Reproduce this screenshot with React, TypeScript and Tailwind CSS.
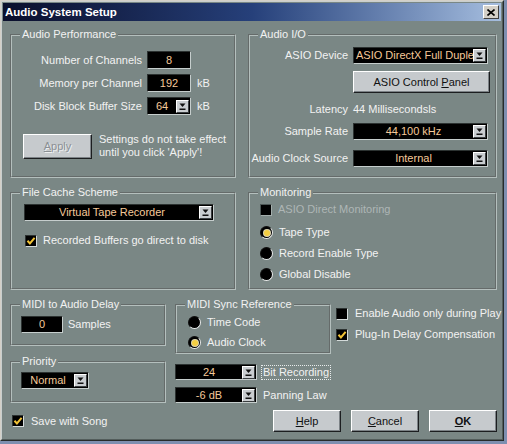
import type { ReactNode } from 'react'

// Cubase-style "Audio System Setup" dialog (classic Windows look)

function Group({ title, className, children }: { title: string; className: string; children?: ReactNode }) {
  return (
    <fieldset className={`border-2 [border-style:groove] border-[#b4bfbd] min-w-0 ${className}`}>
      <legend className="ml-[8px] px-[2px] leading-[13px]">{title}</legend>
      {children}
    </fieldset>
  )
}

function Arrow() {
  return (
    <div className="w-[13px] h-[13px] shrink-0 mr-px flex items-center justify-center bg-[#c9cdd0] border border-t-white border-l-white border-r-[#3a3e40] border-b-[#3a3e40]">
      <svg width="9" height="9" viewBox="0 0 9 9">
        <path d="M1.5 1.5h6L4.5 5z" fill="#111" />
        <rect x="1.5" y="6.5" width="6" height="1.5" fill="#111" />
      </svg>
    </div>
  )
}

function Field({ className, children }: { className: string; children?: ReactNode }) {
  return (
    <div className={`flex items-center justify-center bg-black text-[#f5c99a] border border-t-[#2c3231] border-l-[#2c3231] border-r-[#c6cecd] border-b-[#c6cecd] ${className}`}>
      {children}
    </div>
  )
}

function Combo({ text, className, left }: { text: string; className: string; left?: boolean }) {
  return (
    <div className={`flex items-center bg-black text-[#f5c99a] border border-t-[#2c3231] border-l-[#2c3231] border-r-[#c6cecd] border-b-[#c6cecd] ${className}`}>
      <span className={`flex-1 min-w-0 overflow-hidden whitespace-nowrap ${left ? 'pl-[2px] -mr-[7px]' : 'text-center'}`}>{text}</span>
      <Arrow />
    </div>
  )
}

function Check({ on, disabled }: { on?: boolean; disabled?: boolean }) {
  return (
    <div className={`w-[12px] h-[12px] shrink-0 flex items-center justify-center bg-black border ${disabled ? 'border-t-[#4c5655] border-l-[#4c5655] border-r-[#a3adab] border-b-[#a3adab]' : 'border-t-[#2c3231] border-l-[#2c3231] border-r-[#d4dbda] border-b-[#d4dbda]'}`}>
      {on && (
        <svg width="10" height="10" viewBox="0 0 10 10">
          <path d="M1.5 4.8l2.4 2.6L8.6 1.8" fill="none" stroke="#f2c335" strokeWidth="2" />
        </svg>
      )}
    </div>
  )
}

function Radio({ on }: { on?: boolean }) {
  return (
    <div className="w-[13px] h-[13px] shrink-0 rounded-full bg-black border-[1.5px] border-t-[#111] border-l-[#111] border-r-[#eef0f0] border-b-[#eef0f0] flex items-center justify-center">
      {on && <div className="w-[6px] h-[6px] rounded-full bg-[#f4cf42] shadow-[0_0_0_1px_#ddd6b0]" />}
    </div>
  )
}

function Btn({ className, children }: { className: string; children?: ReactNode }) {
  return (
    <div className={`flex items-center justify-center bg-[#c6cacd] text-[#101010] border border-t-white border-l-white border-r-[#1c1e20] border-b-[#1c1e20] shadow-[inset_-1px_-1px_0_#7c8286] ${className}`}>
      {children}
    </div>
  )
}

function Row({ label, labelW, children }: { label: string; labelW: string; children?: ReactNode }) {
  return (
    <div className="flex items-center gap-[5px]">
      <span className={`text-right whitespace-nowrap ${labelW}`}>{label}</span>
      {children}
    </div>
  )
}

export default function App() {
  return (
    <div className="w-[507px] h-[444px] bg-[#7e8fb0] font-['Liberation_Sans',Arial,sans-serif] text-[11px] leading-[13px] text-[#f2f2f2]">
      <div className="w-[504px] h-[441px] border border-t-[#d4d0c8] border-l-[#d4d0c8] border-r-[#262b2a] border-b-[#262b2a] bg-[#7a8785]">
        <div className="h-full flex flex-col p-px border border-t-[#c9cfce] border-l-[#c9cfce] border-r-[#535d5b] border-b-[#535d5b]">
          {/* title bar */}
          <div className="h-[18px] shrink-0 flex items-center justify-between bg-gradient-to-r from-[#0a0f2c] via-[#26407a] to-[#a6bedf]">
            <span className="pl-[2px] text-white font-bold text-[11.5px]">Audio System Setup</span>
            <div className="w-[16px] h-[14px] mr-[2px] flex items-center justify-center bg-[#d4d0c8] border border-t-white border-l-white border-r-[#404040] border-b-[#404040]">
              <svg width="8" height="7" viewBox="0 0 8 7">
                <path d="M0.5 0.5l7 6M7.5 0.5l-7 6" stroke="#000" strokeWidth="1.6" />
              </svg>
            </div>
          </div>

          <div className="flex-1 flex flex-col pl-[7px] pt-[7px]">
            {/* row 1 */}
            <div className="flex gap-[12px] h-[150px]">
              <Group title="Audio Performance" className="w-[226px]">
                <div className="pt-[10px] flex flex-col gap-[5px]">
                  <Row label="Number of Channels" labelW="w-[130px]">
                    <Field className="w-[44px] h-[18px]">8</Field>
                  </Row>
                  <Row label="Memory per Channel" labelW="w-[130px]">
                    <Field className="w-[44px] h-[18px]">192</Field>
                    <span className="ml-[1px]">kB</span>
                  </Row>
                  <Row label="Disk Block Buffer Size" labelW="w-[130px]">
                    <Combo text="64" className="w-[44px] h-[18px]" />
                    <span className="ml-[1px]">kB</span>
                  </Row>
                </div>
                <div className="mt-[18px] ml-[11px] flex items-center gap-[7px]">
                  <Btn className="w-[69px] h-[25px] bg-[#b9bdc1]">
                    <span className="text-[#8b9094] [text-shadow:1px_1px_0_#eef0f2]">
                      <span className="underline">A</span>pply
                    </span>
                  </Btn>
                  <div>
                    Settings do not take effect
                    <br />
                    until you click 'Apply'!
                  </div>
                </div>
              </Group>

              <Group title="Audio I/O" className="w-[249px]">
                <div className="pt-[6px] flex flex-col">
                  <Row label="ASIO Device" labelW="w-[98px]">
                    <Combo text="ASIO DirectX Full Duplex" left className="w-[135px] h-[17px]" />
                  </Row>
                  <div className="mt-[7px] ml-[103px]">
                    <Btn className="w-[137px] h-[22px]">
                      <span>
                        ASIO Control <span className="underline">P</span>anel
                      </span>
                    </Btn>
                  </div>
                  <div className="mt-[10px]">
                    <Row label="Latency" labelW="w-[98px]">
                      <span>44 Millisecondsls</span>
                    </Row>
                  </div>
                  <div className="mt-[7px]">
                    <Row label="Sample Rate" labelW="w-[98px]">
                      <Combo text="44,100 kHz" className="w-[135px] h-[17px]" />
                    </Row>
                  </div>
                  <div className="mt-[10px]">
                    <Row label="Audio Clock Source" labelW="w-[98px]">
                      <Combo text="Internal" className="w-[135px] h-[17px]" />
                    </Row>
                  </div>
                </div>
              </Group>
            </div>

            {/* row 2 */}
            <div className="mt-[8px] flex gap-[12px] h-[104px]">
              <Group title="File Cache Scheme" className="w-[226px]">
                <div className="pt-[5px] pl-[12px]">
                  <Combo text="Virtual Tape Recorder" className="w-[190px] h-[17px]" />
                  <div className="mt-[13px] ml-[1px] flex items-center gap-[6px]">
                    <Check on />
                    <span>Recorded Buffers go direct to disk</span>
                  </div>
                </div>
              </Group>

              <Group title="Monitoring" className="w-[249px]">
                <div className="pt-[4px] pl-[10px] flex flex-col">
                  <div className="flex items-center gap-[6px] h-[13px]">
                    <Check disabled />
                    <span className="text-[#aeb6b5]">ASIO Direct Monitoring</span>
                  </div>
                  <div className="mt-[10px] flex flex-col gap-[8px]">
                    <div className="flex items-center gap-[6px]">
                      <Radio on />
                      <span>Tape Type</span>
                    </div>
                    <div className="flex items-center gap-[6px]">
                      <Radio />
                      <span>Record Enable Type</span>
                    </div>
                    <div className="flex items-center gap-[6px]">
                      <Radio />
                      <span>Global Disable</span>
                    </div>
                  </div>
                </div>
              </Group>
            </div>

            {/* row 3 */}
            <div className="mt-[8px] flex">
              <div className="w-[156px] shrink-0 flex flex-col">
                <Group title="MIDI to Audio Delay" className="h-[48px]">
                  <div className="pt-[5px] pl-[9px] flex items-center gap-[5px]">
                    <Field className="w-[42px] h-[17px]">0</Field>
                    <span>Samples</span>
                  </div>
                </Group>
                <Group title="Priority" className="mt-[9px] h-[48px]">
                  <div className="pt-[4px] pl-[9px]">
                    <Combo text="Normal" className="w-[68px] h-[17px]" />
                  </div>
                </Group>
              </div>

              <div className="ml-[9px] w-[156px] shrink-0 flex flex-col">
                <Group title="MIDI Sync Reference" className="h-[56px]">
                  <div className="pt-[5px] pl-[11px] flex flex-col gap-[7px]">
                    <div className="flex items-center gap-[6px]">
                      <Radio />
                      <span>Time Code</span>
                    </div>
                    <div className="flex items-center gap-[6px]">
                      <Radio on />
                      <span>Audio Clock</span>
                    </div>
                  </div>
                </Group>
                <div className="mt-[10px] flex items-center gap-[4px]">
                  <Combo text="24" className="w-[82px] h-[16px] shrink-0" />
                  <span className="px-px whitespace-nowrap border border-dotted border-[#e8ecec]">Bit Recording</span>
                </div>
                <div className="mt-[7px] flex items-center gap-[4px]">
                  <Combo text="-6 dB" className="w-[82px] h-[16px] shrink-0" />
                  <span className="px-px whitespace-nowrap border border-transparent">Panning Law</span>
                </div>
              </div>

              <div className="ml-[5px] pt-[9px] flex flex-col gap-[8px] whitespace-nowrap">
                <div className="flex items-center gap-[7px]">
                  <Check />
                  <span>Enable Audio only during Play</span>
                </div>
                <div className="flex items-center gap-[7px]">
                  <Check on />
                  <span>Plug-In Delay Compensation</span>
                </div>
              </div>
            </div>

            {/* row 4 */}
            <div className="mt-[7px] h-[22px] flex items-center justify-between pr-[4px]">
              <div className="ml-[2px] flex items-center gap-[7px]">
                <Check on />
                <span>Save with Song</span>
              </div>
              <div className="flex gap-[10px]">
                <Btn className="w-[68px] h-[22px]">
                  <span>
                    <span className="underline">H</span>elp
                  </span>
                </Btn>
                <Btn className="w-[68px] h-[22px]">
                  <span>
                    <span className="underline">C</span>ancel
                  </span>
                </Btn>
                <Btn className="w-[68px] h-[22px]">
                  <span className="font-bold">
                    <span className="underline">O</span>K
                  </span>
                </Btn>
              </div>
            </div>
          </div>
        </div>
      </div>
    </div>
  )
}
